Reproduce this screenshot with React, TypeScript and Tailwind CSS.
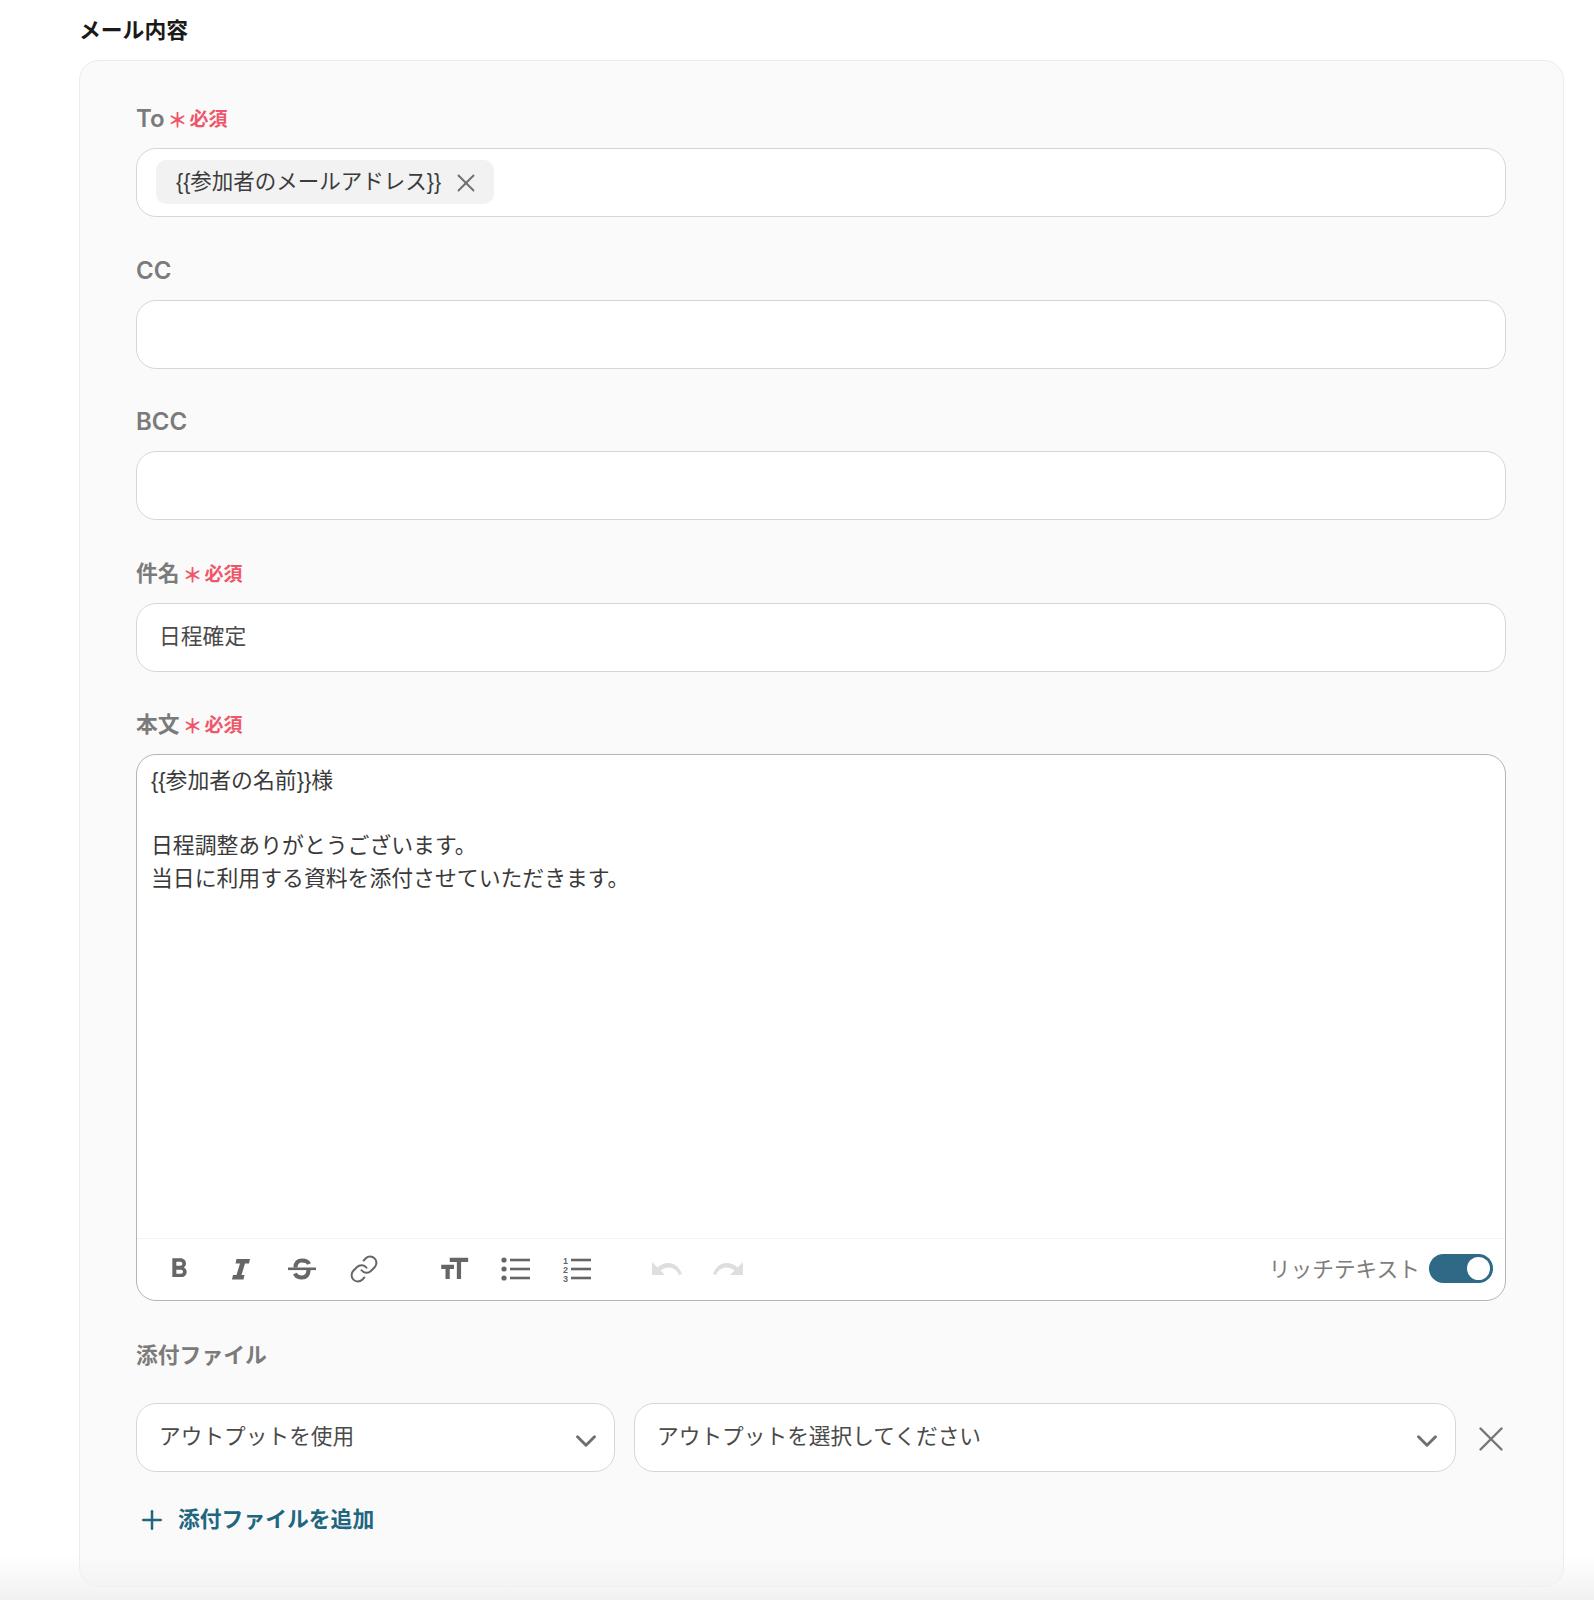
import React from "react";
import { MdFormatBold, MdFormatSize } from "react-icons/md";
import { X, ChevronDown, Plus, Link } from "lucide-react";

function Req() {
  return (
    <span className="flex items-center text-[#f0566a] font-bold">
      <span className="text-[20px] leading-none font-bold mt-[3px] ml-[3px] mr-[2px]">＊</span>
      <span className="text-[19px] leading-none">必須</span>
    </span>
  );
}

function Label({ children, req, latin }: { children: React.ReactNode; req?: boolean; latin?: boolean }) {
  return (
    <div className="flex items-center h-[32px] pt-[2px] mb-[14px] text-[21.8px] font-bold text-[#7b7b7b] leading-none">
      <span className={latin ? "font-['Inter',sans-serif] text-[24px] font-semibold" : ""}>{children}</span>
      {req && <Req />}
    </div>
  );
}

function Input({ children }: { children?: React.ReactNode }) {
  return (
    <div className="h-[68.5px] rounded-[20px] border border-[#d5d6dc] bg-white flex items-center px-[22px] text-[21.8px] text-[#4a4a4a]">
      {children}
    </div>
  );
}

function Select({ text, className }: { text: string; className: string }) {
  return (
    <div className={`h-[69px] shrink-0 rounded-[20px] border border-[#d5d6dc] bg-white flex items-center justify-between pl-[22px] pr-[11px] text-[21.7px] text-[#4a4a4a] ${className}`}>
      <span>{text}</span>
      <ChevronDown size={34} strokeWidth={2.1} className="text-[#707070] mt-[6px]" />
    </div>
  );
}

function ItalicIcon() {
  return (
    <svg width="18" height="22" viewBox="0 0 18 22" className="ml-[37px]" fill="currentColor">
      <path d="M4.5 1H18l-1 4.5h-4L9.5 17h3l-1 4.5H0l1-4.5h3.5L8 5.5H3.5z" />
    </svg>
  );
}

function StrikeIcon() {
  return (
    <svg width="28" height="22" viewBox="0 0 28 22" className="ml-[38px]">
      <rect x="0" y="9.5" width="28" height="2.6" fill="currentColor" />
      <path d="M21 6C20 3.5 17 2.5 14 2.5 10 2.5 7.5 4.5 7.5 9.5M20.5 12C20.5 17 18 19.5 14 19.5 10 19.5 8 18 7 15.5" fill="none" stroke="currentColor" strokeWidth="4.2" />
    </svg>
  );
}

function BulletIcon() {
  return (
    <svg width="30" height="24" viewBox="0 0 30 24" className="ml-[30px]" fill="currentColor">
      <circle cx="3" cy="3" r="2.6" />
      <circle cx="3" cy="12" r="2.6" />
      <circle cx="3" cy="21" r="2.6" />
      <rect x="9" y="1.7" width="20" height="2.6" />
      <rect x="9" y="10.7" width="20" height="2.6" />
      <rect x="9" y="19.7" width="20" height="2.6" />
    </svg>
  );
}

function NumberIcon() {
  return (
    <svg width="30" height="26" viewBox="0 0 30 26" className="ml-[32px]" fill="currentColor">
      <text x="0" y="7.5" fontSize="9" fontWeight="700" fontFamily="Liberation Sans">1</text>
      <text x="0" y="16.5" fontSize="9" fontWeight="700" fontFamily="Liberation Sans">2</text>
      <text x="0" y="25.5" fontSize="9" fontWeight="700" fontFamily="Liberation Sans">3</text>
      <rect x="8" y="2.7" width="20" height="2.6" />
      <rect x="8" y="11.7" width="20" height="2.6" />
      <rect x="8" y="20.7" width="20" height="2.6" />
    </svg>
  );
}

function UndoIcon({ flip, className }: { flip?: boolean; className: string }) {
  return (
    <svg width="30" height="14" viewBox="0 0 30 14" className={`${flip ? "-scale-x-100" : ""} ${className}`} fill="currentColor">
      <path d="M0 0V13H13L8.5 8.5C11 6.5 14 5.5 16.5 5.5 21 5.5 25 8 27 13L30 12C27.5 5 22 1 16.5 1 12.5 1 8.5 2.5 5.5 5.5Z" />
    </svg>
  );
}

export default function App() {
  return (
    <div className="relative h-[1600px] overflow-hidden bg-white pl-[79px] pr-[30px] font-['Liberation_Sans','Noto_Sans_CJK_JP',sans-serif]">
      <h2 className="h-[60px] pt-[2px] flex items-center text-[21.8px] font-bold text-[#1a1a1a] leading-none">メール内容</h2>
      <div className="h-[1527px] rounded-[20px] border border-[#ececec] bg-[#fafafa] pt-[41px] pl-[56px]">
        <div className="w-[1370px]">
          <Label req latin>To</Label>
          <Input>
            <span className="-ml-[3px] -mt-[1px] h-[44px] rounded-[10px] bg-[#f2f2f3] flex items-center pl-[20px] pr-[13px] text-[21.5px] text-[#3c3c3c]">
              {"{{参加者のメールアドレス}}"}
              <X size={30} strokeWidth={1.5} className="text-[#707070] ml-[10px] mt-[2px]" />
            </span>
          </Input>
          <div className="h-[37.5px]" />
          <Label latin>CC</Label>
          <Input />
          <div className="h-[36.5px]" />
          <Label latin>BCC</Label>
          <Input />
          <div className="h-[37.5px]" />
          <Label req>件名</Label>
          <Input><span>日程確定</span></Input>
          <div className="h-[36.5px]" />
          <Label req>本文</Label>
          <div className="h-[547px] rounded-[20px] border border-[#b4b4b4] bg-white flex flex-col overflow-hidden">
            <div className="flex-1 pt-[9.5px] pl-[14px] pr-[14px] text-[21.85px] leading-[32.8px] text-[#3a3a3a]">
              <div>{"{{参加者の名前}}様"}</div>
              <div className="h-[32.8px]" />
              <div>日程調整ありがとうございます。</div>
              <div>当日に利用する資料を添付させていただきます。</div>
            </div>
            <div className="h-[62px] pb-[2px] border-t border-[#f3f3f3] flex items-center text-[#666666]">
              <div className="flex items-center pl-[26px]">
                <MdFormatBold size={32} />
                <ItalicIcon />
                <StrikeIcon />
                <Link size={30} strokeWidth={1.6} className="ml-[33px]" />
                <MdFormatSize size={34} className="ml-[58px]" />
                <BulletIcon />
                <NumberIcon />
                <UndoIcon className="ml-[59px] text-[#dedede]" />
                <UndoIcon flip className="ml-[31px] text-[#dedede]" />
              </div>
              <div className="ml-auto flex items-center pr-[12px]">
                <span className="text-[21.7px] text-[#7d7d7d] mr-[9px] mt-[3px]">リッチテキスト</span>
                <span className="w-[64px] h-[29px] mt-[1px] rounded-full bg-[#2e6a85] flex items-center justify-end pr-[3px]">
                  <span className="w-[23px] h-[23px] rounded-full bg-white" />
                </span>
              </div>
            </div>
          </div>
          <div className="h-[38px]" />
          <div className="mb-[32px]"><Label>添付ファイル</Label></div>
          <div className="flex items-center">
            <Select text="アウトプットを使用" className="w-[479px]" />
            <Select text="アウトプットを選択してください" className="w-[822px] ml-[19px]" />
            <X size={42} strokeWidth={1.4} className="shrink-0 text-[#777777] ml-[14px] mt-[2px]" />
          </div>
          <div className="flex items-center mt-[32px] text-[21.8px] font-bold text-[#20667f]">
            <Plus size={30} strokeWidth={2} className="ml-[1px] mr-[11px]" />
            <span>添付ファイルを追加</span>
          </div>
        </div>
      </div>
      <div className="absolute inset-x-0 bottom-0 h-[45px] bg-gradient-to-t from-[#f1f1f1] to-transparent pointer-events-none" />
    </div>
  );
}
